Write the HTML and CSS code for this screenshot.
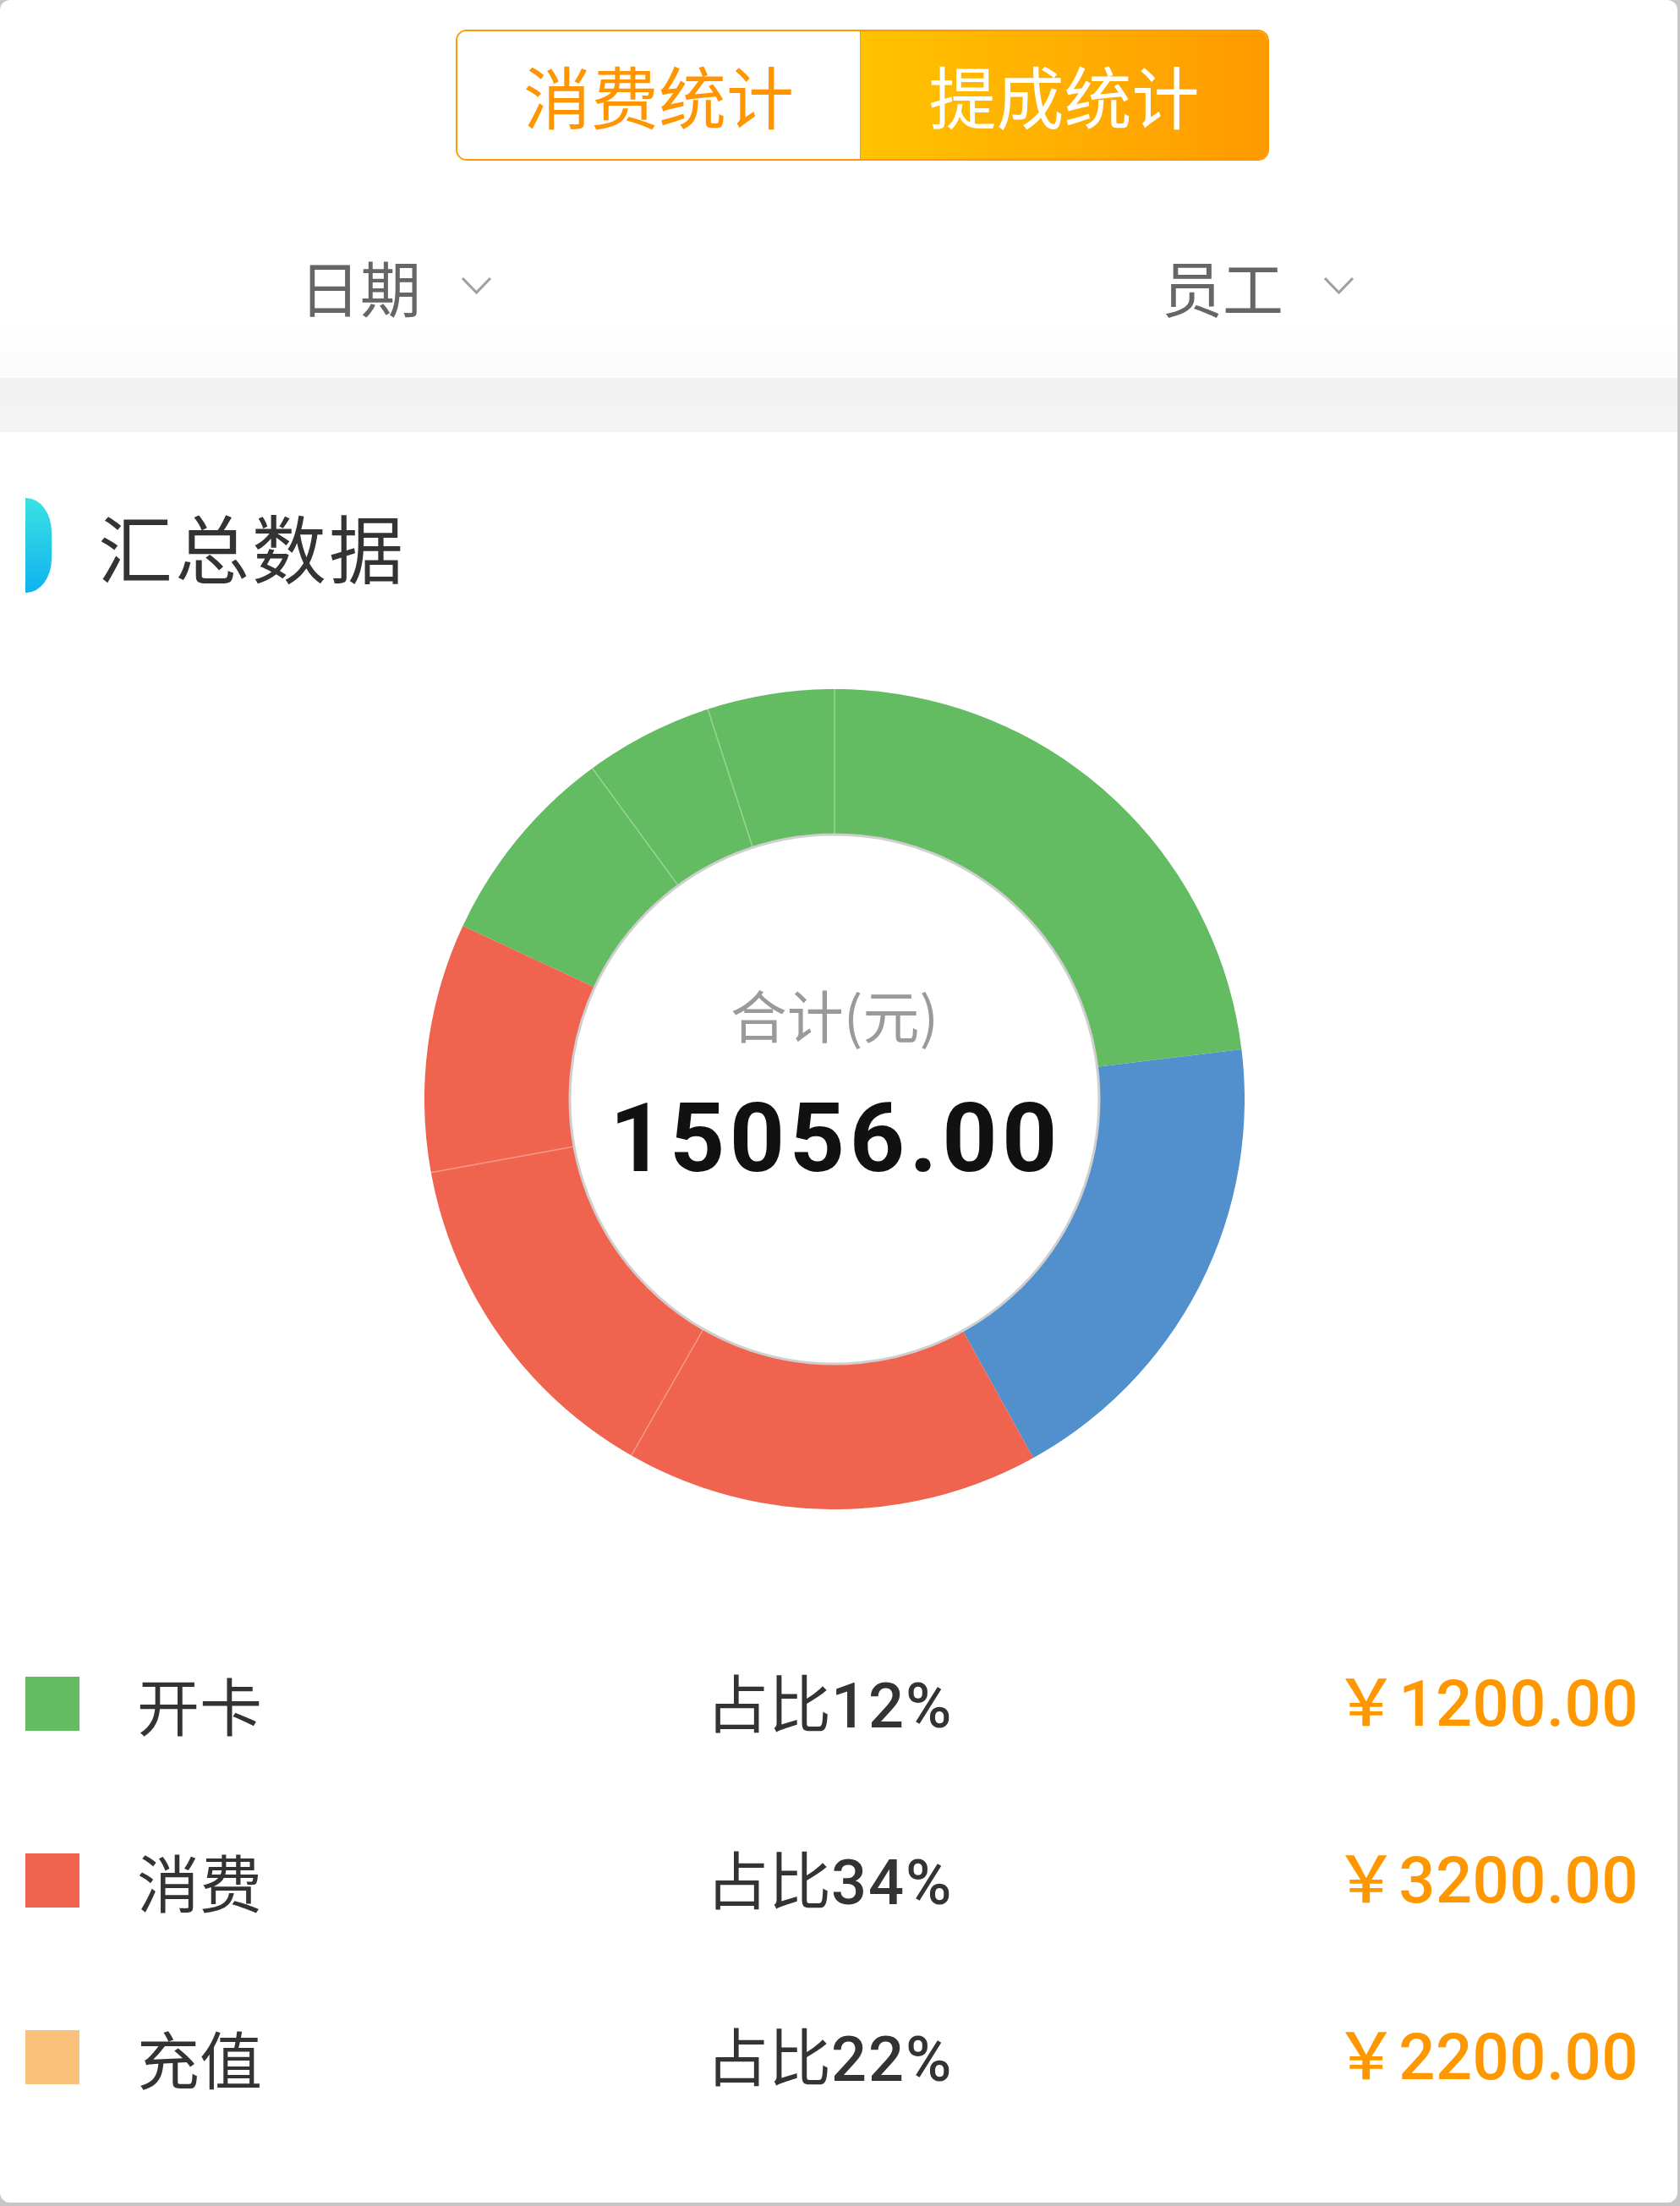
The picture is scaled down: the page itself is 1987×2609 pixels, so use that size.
FILE: index.html
```html
<!DOCTYPE html>
<html lang="zh-CN">
<head>
<meta charset="utf-8">
<title>提成统计</title>
<link rel="stylesheet" href="styles.css">
</head>
<body>
<div class="card">
  <div class="toggle">
    <div class="seg seg-off">消费统计</div>
    <div class="seg seg-on">提成统计</div>
  </div>

  <div class="filters">
    <div class="filter filter-left">
      <span class="filter-text">日期</span>
      <svg class="chev" width="37" height="22" viewBox="0 0 37 22"><polyline points="2,2 18.5,19 35,2" fill="none" stroke="#a0a0a0" stroke-width="3.2"/></svg>
    </div>
    <div class="filter filter-right">
      <span class="filter-text">员工</span>
      <svg class="chev" width="37" height="22" viewBox="0 0 37 22"><polyline points="2,2 18.5,19 35,2" fill="none" stroke="#a0a0a0" stroke-width="3.2"/></svg>
    </div>
  </div>

  <div class="band"></div>

  <div class="section-title">
    <div class="title-bar"></div>
    <h2 class="title-text">汇总数据</h2>
  </div>

  <div class="donut">
    <svg class="donut-svg" width="970" height="970" viewBox="0 0 970 970">
      <path d="M 123.38 316.37 A 399 399 0 0 1 881.03 436.37" fill="none" stroke="#64bc62" stroke-width="172"/>
      <path d="M 881.03 436.37 A 399 399 0 0 1 678.44 833.97" fill="none" stroke="#5290cd" stroke-width="172"/>
      <path d="M 678.44 833.97 A 399 399 0 0 1 123.38 316.37" fill="none" stroke="#f0634e" stroke-width="172"/>
      <g stroke="rgba(255,255,255,0.35)" stroke-width="1.5">
        <line x1="485" y1="172" x2="485" y2="0"/>
        <line x1="329.92" y1="756.88" x2="244.70" y2="906.29"/>
        <line x1="177.04" y1="540.96" x2="7.81" y2="571.72"/>
        <line x1="300.14" y1="232.42" x2="198.55" y2="93.62"/>
        <line x1="388.28" y1="187.32" x2="335.13" y2="23.74"/>
      </g>
      <circle cx="485" cy="485" r="313" fill="#ffffff" stroke="#cfcfcf" stroke-width="3"/>
    </svg>
    <div class="donut-center">
      <div class="total-label">合计(元)</div>
      <div class="total-value">15056.00</div>
    </div>
  </div>

  <ul class="legend">
    <li class="legend-row">
      <span class="swatch swatch-green"></span>
      <span class="legend-name">开卡</span>
      <span class="legend-ratio">占比<b>12%</b></span>
      <span class="legend-amount">￥1200.00</span>
    </li>
    <li class="legend-row">
      <span class="swatch swatch-red"></span>
      <span class="legend-name">消费</span>
      <span class="legend-ratio">占比<b>34%</b></span>
      <span class="legend-amount">￥3200.00</span>
    </li>
    <li class="legend-row">
      <span class="swatch swatch-orange"></span>
      <span class="legend-name">充值</span>
      <span class="legend-ratio">占比<b>22%</b></span>
      <span class="legend-amount">￥2200.00</span>
    </li>
  </ul>
</div>
</body>
</html>
```

FILE: styles.css
```css
* {
  box-sizing: border-box;
}

html, body {
  margin: 0;
  padding: 0;
}

body {
  background: #c6c6c6;
  width: 1987px;
  height: 2609px;
  font-family: "Noto Sans CJK SC", "Noto Sans", sans-serif;
}

.card {
  width: 1984px;
  height: 2605px;
  background: #ffffff;
  border-radius: 12px;
  overflow: hidden;
  display: flex;
  flex-direction: column;
}

/* toggle */
.toggle {
  margin-top: 35px;
  margin-left: 539px;
  width: 962px;
  height: 155px;
  display: flex;
  border: 2px solid #ff9a00;
  border-radius: 13px;
  overflow: hidden;
}

.seg {
  display: flex;
  align-items: center;
  justify-content: center;
  font-size: 80px;
  line-height: 1;
  padding-bottom: 4px;
}

.seg-off {
  flex: 0 0 477px;
  background: #ffffff;
  color: #ff9500;
  border-right: 1px solid #ff9a00;
}

.seg-on {
  flex: 1;
  color: #ffffff;
  background: linear-gradient(to right, #ffc300, #ff9a00);
}

/* filters */
.filters {
  height: 257px;
  display: flex;
  align-items: flex-start;
  padding-top: 110px;
  background: linear-gradient(to bottom, #ffffff 0%, #ffffff 72%, #fbfbfb 100%);
}

.filter {
  flex: 0 0 50%;
  display: flex;
  align-items: center;
  justify-content: center;
  height: 76px;
}

.filter-left {
  padding-right: 56px;
}

.filter-text {
  font-size: 72px;
  line-height: 76px;
  color: #666666;
}

.chev {
  margin-left: 47px;
  display: block;
}

/* gray band */
.band {
  height: 64px;
  background: linear-gradient(to bottom, #f1f1f1, #f4f4f4);
}

/* section title */
.section-title {
  margin-top: 78px;
  height: 112px;
  display: flex;
  align-items: center;
}

.title-bar {
  margin-left: 30px;
  width: 31px;
  height: 112px;
  border-radius: 0 30px 30px 0 / 0 40px 40px 0;
  background: linear-gradient(to bottom, #3ae2e4, #10b2ee);
}

.title-text {
  margin: 0 0 0 55px;
  font-size: 88px;
  font-weight: 400;
  line-height: 112px;
  letter-spacing: 3px;
  color: #333333;
}

/* donut */
.donut {
  margin-top: 114px;
  margin-left: 502px;
  width: 970px;
  height: 970px;
  display: grid;
}

.donut-svg {
  grid-area: 1 / 1;
  display: block;
}

.donut-center {
  grid-area: 1 / 1;
  display: flex;
  flex-direction: column;
  align-items: center;
  justify-content: center;
  padding-bottom: 30px;
}

.total-label {
  font-size: 67px;
  line-height: 80px;
  color: #9a9a9a;
}

.total-value {
  margin-top: 42px;
  font-family: "Roboto", "Liberation Sans", sans-serif;
  font-weight: 700;
  font-size: 114px;
  line-height: 130px;
  letter-spacing: 5.5px;
  padding-left: 3px;
  color: #111111;
}

/* legend */
.legend {
  list-style: none;
  margin: 125px 0 0 0;
  padding: 0;
}

.legend-row {
  height: 209px;
  display: flex;
  align-items: center;
}

.swatch {
  margin-left: 30px;
  flex: 0 0 64px;
  height: 64px;
}

.swatch-green { background: #64bc62; }
.swatch-red { background: #f0634e; }
.swatch-orange { background: #f9c17a; }

.legend-name {
  margin-left: 68px;
  flex: 0 0 673px;
  font-size: 74px;
  line-height: 90px;
  color: #333333;
}

.legend-ratio {
  flex: 1;
  font-size: 74px;
  line-height: 90px;
  color: #333333;
}

.legend-ratio b {
  font-family: "Roboto", "Liberation Sans", sans-serif;
  font-weight: 500;
  letter-spacing: 2px;
}

.legend-amount {
  margin-right: 46px;
  font-family: "Roboto", "Noto Sans CJK SC", sans-serif;
  font-weight: 500;
  font-size: 76px;
  line-height: 90px;
  letter-spacing: 0.5px;
  color: #ff9800;
  text-align: right;
}
```
